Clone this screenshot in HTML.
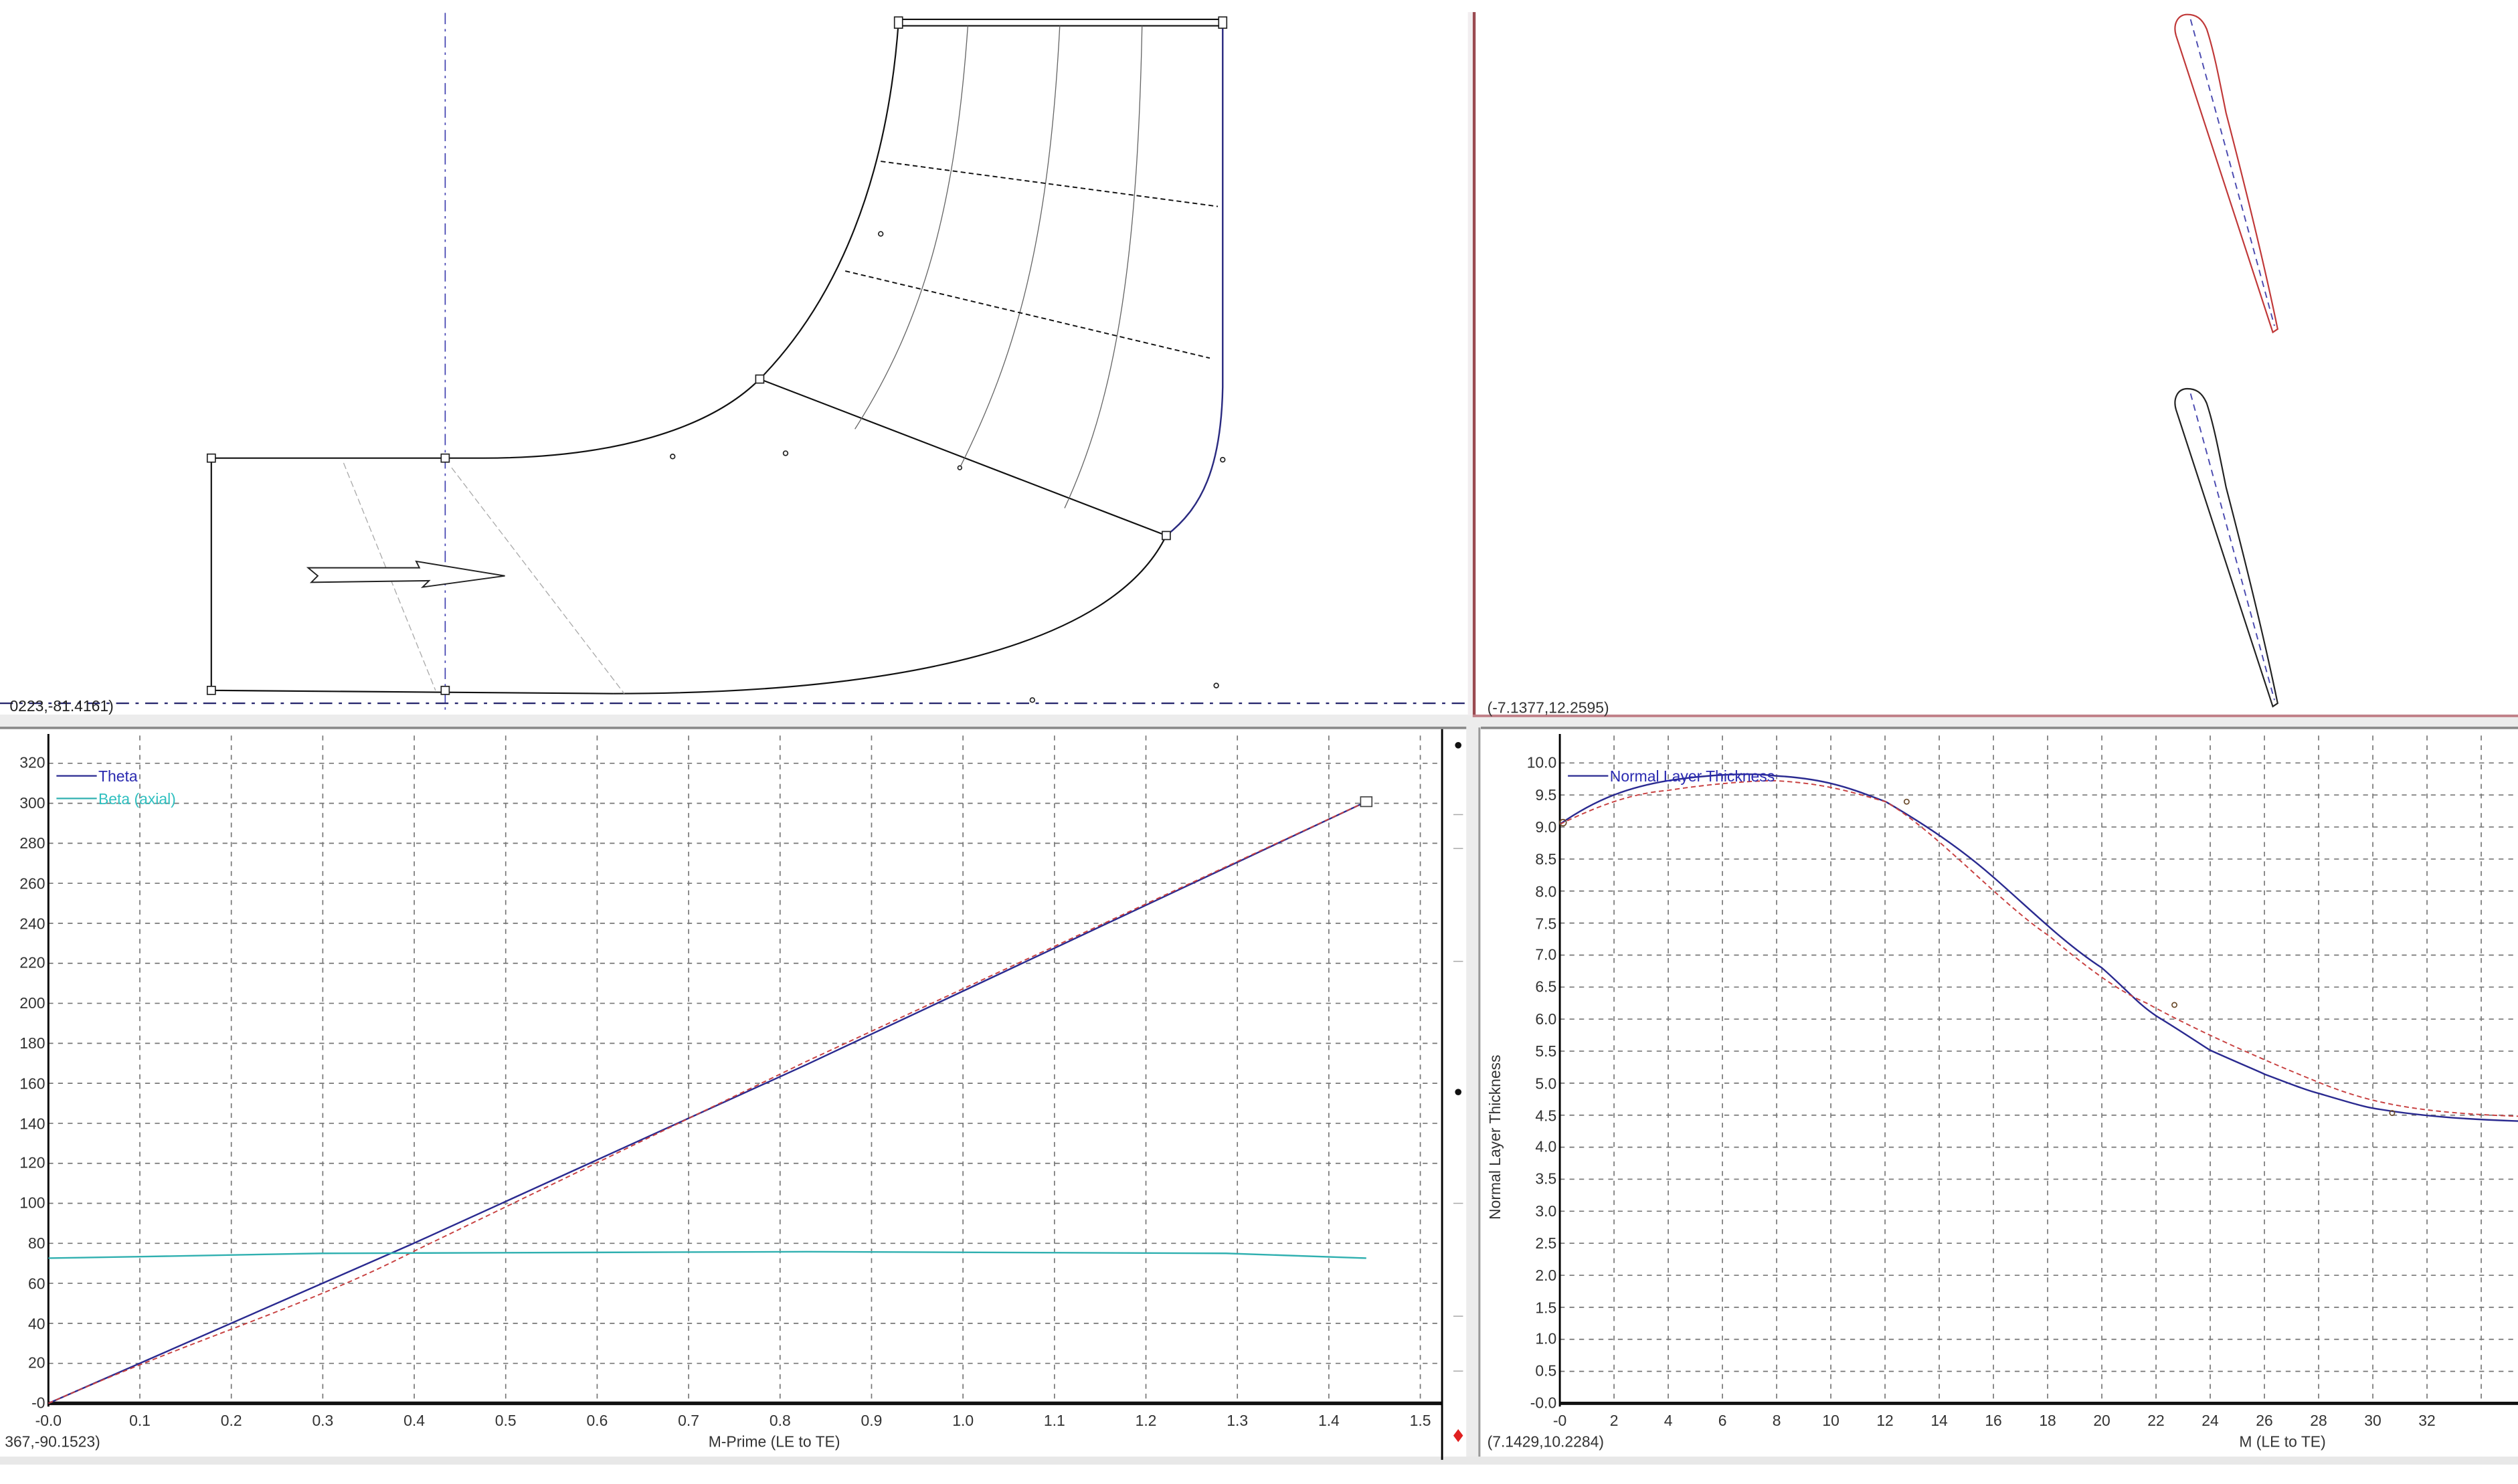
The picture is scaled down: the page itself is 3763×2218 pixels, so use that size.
<!DOCTYPE html>
<html><head><meta charset="utf-8"><style>
html,body{margin:0;padding:0;background:#fff;}
svg{display:block;}
text{font-family:"Liberation Sans",sans-serif;}
</style></head><body>
<svg width="3763" height="2218" viewBox="0 0 1561 920" preserveAspectRatio="none" xmlns="http://www.w3.org/2000/svg">
<rect width="1561" height="920" fill="#fff"/>
<rect x="0" y="443" width="1561" height="9" fill="#ececec"/>
<rect x="0" y="450.5" width="912" height="1.5" fill="#8a8a8a"/>
<rect x="918" y="450.5" width="643" height="1.5" fill="#8a8a8a"/>
<rect x="909" y="445" width="9" height="462" fill="#ececec"/>
<rect x="916.5" y="451" width="1.2" height="455" fill="#999"/>
<rect x="0" y="903" width="1561" height="5" fill="#e8e8e8"/>
<rect x="910" y="7.5" width="3" height="436" fill="#f2eef0"/>
<rect x="913" y="7.5" width="1.8" height="437" fill="#9a4a50"/>
<rect x="913" y="443" width="648" height="1.6" fill="#c08088"/>

<line x1="0" y1="436" x2="912" y2="436" stroke="#22226a" stroke-width="0.9" stroke-dasharray="8 4 2 4"/>
<line x1="276" y1="8" x2="276" y2="442" stroke="#4040b0" stroke-width="0.7" stroke-dasharray="7 3 1.5 3"/>
<text x="6" y="441" font-size="9.5" fill="#222">0223,-81.4161)</text>
<g fill="none" stroke="#111" stroke-width="0.9">
<path d="M131,284 L131,428 L380,430"/>
<path d="M131,284 L300,284 C380,284 440,266 471,235 C520,185 550,110 557,14"/>
<path d="M557,12 L758,12 M557,16 L758,16"/>
<path d="M380,430 C560,430 690,400 723,332"/>
<path d="M471,235 L723,332"/>
</g>
<path d="M758,14 L758,240 C757,290 745,315 723,332" fill="none" stroke="#2a2a80" stroke-width="1"/>
<g fill="none" stroke="#666" stroke-width="0.55">
<path d="M600,16 C592,130 572,200 530,266"/>
<path d="M657,16 C650,150 630,220 595,290"/>
<path d="M708,16 C705,170 690,250 660,315"/>
<path d="M213,287 L270,428 M280,290 L387,430" stroke="#aaa" stroke-dasharray="4 2"/>
</g>
<g stroke="#111" stroke-width="0.8" stroke-dasharray="3 2" fill="none">
<path d="M546,100 L755,128"/>
<path d="M524,168 L750,222"/>
</g>
<path d="M191,352 L260,352 L258,348 L313,357 L262,364 L266,360 L193,361 L197,357 Z" fill="#fff" stroke="#222" stroke-width="0.8"/>
<g fill="#fff" stroke="#222" stroke-width="0.7">
<rect x="128.5" y="281.5" width="5" height="5"/><rect x="273.5" y="281.5" width="5" height="5"/>
<rect x="128.5" y="425.5" width="5" height="5"/><rect x="273.5" y="425.5" width="5" height="5"/>
<rect x="468.5" y="232.5" width="5" height="5"/><rect x="720.5" y="329.5" width="5" height="5"/>
<rect x="554.5" y="10.5" width="5" height="7"/><rect x="755.5" y="10.5" width="5" height="7"/>
<circle cx="546" cy="145" r="1.4"/><circle cx="417" cy="283" r="1.4"/><circle cx="487" cy="281" r="1.4"/>
<circle cx="758" cy="285" r="1.4"/><circle cx="754" cy="425" r="1.4"/><circle cx="640" cy="434" r="1.4"/><circle cx="595" cy="290" r="1.2"/>
</g>

<path d="M1356,9 C1350,9 1347,15 1349,22 L1409,206 L1412,204 C1405,170 1393,120 1380,70 C1375,45 1372,30 1368,18 C1365,11 1361,9 1356,9 Z" fill="#fff" stroke="#c03838" stroke-width="0.9"/>
<path d="M1358,12 L1410,202" stroke="#4a4ab0" stroke-width="0.8" stroke-dasharray="4 3"/>
<path d="M1356,241 C1350,241 1347,247 1349,254 L1409,438 L1412,436 C1405,402 1393,352 1380,302 C1375,277 1372,262 1368,250 C1365,243 1361,241 1356,241 Z" fill="#fff" stroke="#222" stroke-width="0.9"/>
<path d="M1358,244 L1410,434" stroke="#4a4ab0" stroke-width="0.8" stroke-dasharray="4 3"/>
<text x="922" y="442" font-size="9.5" fill="#333">(-7.1377,12.2595)</text>

<g stroke="#777" stroke-width="0.7" fill="none" stroke-dasharray="3 3">
<path d="M86.7,456V870M143.4,456V870M200.1,456V870M256.8,456V870M313.5,456V870M370.2,456V870M426.9,456V870M483.6,456V870M540.3,456V870M597,456V870M653.7,456V870M710.4,456V870M767.1,456V870M823.8,456V870M880.5,456V870"/>
<path d="M30,845.2H894M30,820.4H894M30,795.6H894M30,770.8H894M30,746H894M30,721.2H894M30,696.4H894M30,671.6H894M30,646.8H894M30,622H894M30,597.2H894M30,572.4H894M30,547.6H894M30,522.8H894M30,498H894M30,473.2H894"/>
</g>
<line x1="30" y1="455" x2="30" y2="872" stroke="#000" stroke-width="1.2"/>
<line x1="30" y1="870" x2="894" y2="870" stroke="#111" stroke-width="2.2"/>
<line x1="894" y1="452" x2="894" y2="905" stroke="#000" stroke-width="1.2"/>
<g font-size="9.5" fill="#333" text-anchor="end">
<text x="28" y="873">-0</text><text x="28" y="848">20</text><text x="28" y="824">40</text><text x="28" y="799">60</text><text x="28" y="774">80</text><text x="28" y="749">100</text><text x="28" y="724">120</text><text x="28" y="700">140</text><text x="28" y="675">160</text><text x="28" y="650">180</text><text x="28" y="625">200</text><text x="28" y="600">220</text><text x="28" y="576">240</text><text x="28" y="551">260</text><text x="28" y="526">280</text><text x="28" y="501">300</text><text x="28" y="476">320</text>
</g>
<g font-size="9.5" fill="#333" text-anchor="middle">
<text x="30" y="884">-0.0</text><text x="86.7" y="884">0.1</text><text x="143.4" y="884">0.2</text><text x="200.1" y="884">0.3</text><text x="256.8" y="884">0.4</text><text x="313.5" y="884">0.5</text><text x="370.2" y="884">0.6</text><text x="426.9" y="884">0.7</text><text x="483.6" y="884">0.8</text><text x="540.3" y="884">0.9</text><text x="597" y="884">1.0</text><text x="653.7" y="884">1.1</text><text x="710.4" y="884">1.2</text><text x="767.1" y="884">1.3</text><text x="823.8" y="884">1.4</text><text x="880.5" y="884">1.5</text>
<text x="480" y="897">M-Prime (LE to TE)</text>
</g>
<text x="3" y="897" font-size="9.5" fill="#333">367,-90.1523)</text>
<path d="M30,870 L256,771 L500,660 L847,497" fill="none" stroke="#2a2a90" stroke-width="1"/>
<path d="M30,870 C120,830 190,810 256,776 L500,658 L847,497" fill="none" stroke="#c84040" stroke-width="0.8" stroke-dasharray="3 2"/>
<path d="M30,780 L90,779 L200,777 L500,776 L760,777 L847,780" fill="none" stroke="#30b0b0" stroke-width="1"/>
<rect x="843.5" y="494" width="7" height="6" fill="#fff" stroke="#444" stroke-width="0.7"/>
<line x1="35" y1="481" x2="60" y2="481" stroke="#2a2a90" stroke-width="0.9"/>
<text x="61" y="484.5" font-size="9.5" fill="#2a2ab0">Theta</text>
<line x1="35" y1="495" x2="60" y2="495" stroke="#30b0b0" stroke-width="0.9"/>
<text x="61" y="498.5" font-size="9.5" fill="#30c0c0">Beta (axial)</text>
<g fill="#111"><circle cx="904" cy="462" r="2"/><circle cx="904" cy="677" r="2"/></g>
<g stroke="#aaa" stroke-width="0.6"><path d="M901,505H907M901,526H907M901,596H907M901,746H907M901,816H907M901,850H907"/></g>
<path d="M904,886 L907,890 L904,894 L901,890 Z" fill="#e02020"/>

<g stroke="#777" stroke-width="0.7" fill="none" stroke-dasharray="3 3">
<path d="M1000.6,456V870M1034.2,456V870M1067.8,456V870M1101.4,456V870M1135,456V870M1168.6,456V870M1202.2,456V870M1235.8,456V870M1269.4,456V870M1303,456V870M1336.6,456V870M1370.2,456V870M1403.8,456V870M1437.4,456V870M1471,456V870M1504.6,456V870M1538.2,456V870"/>
<path d="M967,850.15H1561M967,830.3H1561M967,810.45H1561M967,790.6H1561M967,770.75H1561M967,750.9H1561M967,731.05H1561M967,711.2H1561M967,691.35H1561M967,671.5H1561M967,651.65H1561M967,631.8H1561M967,611.95H1561M967,592.1H1561M967,572.25H1561M967,552.4H1561M967,532.55H1561M967,512.7H1561M967,492.85H1561M967,473H1561"/>
</g>
<line x1="967" y1="455" x2="967" y2="872" stroke="#000" stroke-width="1.2"/>
<line x1="967" y1="870" x2="1561" y2="870" stroke="#111" stroke-width="2"/>
<g font-size="9.5" fill="#333" text-anchor="end">
<text x="965" y="873">-0.0</text><text x="965" y="853">0.5</text><text x="965" y="833">1.0</text><text x="965" y="814">1.5</text><text x="965" y="794">2.0</text><text x="965" y="774">2.5</text><text x="965" y="754">3.0</text><text x="965" y="734">3.5</text><text x="965" y="714">4.0</text><text x="965" y="695">4.5</text><text x="965" y="675">5.0</text><text x="965" y="655">5.5</text><text x="965" y="635">6.0</text><text x="965" y="615">6.5</text><text x="965" y="595">7.0</text><text x="965" y="576">7.5</text><text x="965" y="556">8.0</text><text x="965" y="536">8.5</text><text x="965" y="516">9.0</text><text x="965" y="496">9.5</text><text x="965" y="476">10.0</text>
</g>
<g font-size="9.5" fill="#333" text-anchor="middle">
<text x="967" y="884">-0</text><text x="1000.6" y="884">2</text><text x="1034.2" y="884">4</text><text x="1067.8" y="884">6</text><text x="1101.4" y="884">8</text><text x="1135" y="884">10</text><text x="1168.6" y="884">12</text><text x="1202.2" y="884">14</text><text x="1235.8" y="884">16</text><text x="1269.4" y="884">18</text><text x="1303" y="884">20</text><text x="1336.6" y="884">22</text><text x="1370.2" y="884">24</text><text x="1403.8" y="884">26</text><text x="1437.4" y="884">28</text><text x="1471" y="884">30</text><text x="1504.6" y="884">32</text>
<text x="1415" y="897">M (LE to TE)</text>
</g>
<text x="922" y="897" font-size="9.5" fill="#333">(7.1429,10.2284)</text>
<text transform="translate(930,705) rotate(-90)" font-size="9.5" fill="#333" text-anchor="middle">Normal Layer Thickness</text>
<path d="M967,511 C990,495 1010,488 1034,484 C1060,480 1085,479 1101,481 C1135,483 1150,490 1169,497 C1200,515 1220,530 1236,544 C1260,565 1280,585 1303,600 C1320,615 1325,622 1337,630 C1355,641 1365,648 1370,651 C1390,660 1400,664 1404,666 C1420,672 1430,676 1438,678 C1455,683 1465,686 1471,687 C1500,692 1530,694 1561,695" fill="none" stroke="#2a2a90" stroke-width="1"/>
<path d="M967,511 C990,500 1010,492 1034,490 C1060,486 1085,484 1101,484 C1135,486 1150,492 1169,497 C1200,515 1240,560 1270,580 C1300,605 1315,615 1331,622 C1360,638 1400,656 1440,672 C1470,684 1500,690 1561,692" fill="none" stroke="#c84040" stroke-width="0.8" stroke-dasharray="3 2"/>
<g fill="none" stroke="#6a4a2a" stroke-width="0.7"><circle cx="969" cy="510" r="2"/><circle cx="1182" cy="497" r="1.5"/><circle cx="1348" cy="623" r="1.5"/><circle cx="1483" cy="690" r="1.5"/></g>
<line x1="972" y1="481" x2="997" y2="481" stroke="#2a2a90" stroke-width="0.9"/>
<text x="998" y="484.5" font-size="9.5" fill="#2a2ab0">Normal Layer Thickness</text>
</svg>
</body></html>
